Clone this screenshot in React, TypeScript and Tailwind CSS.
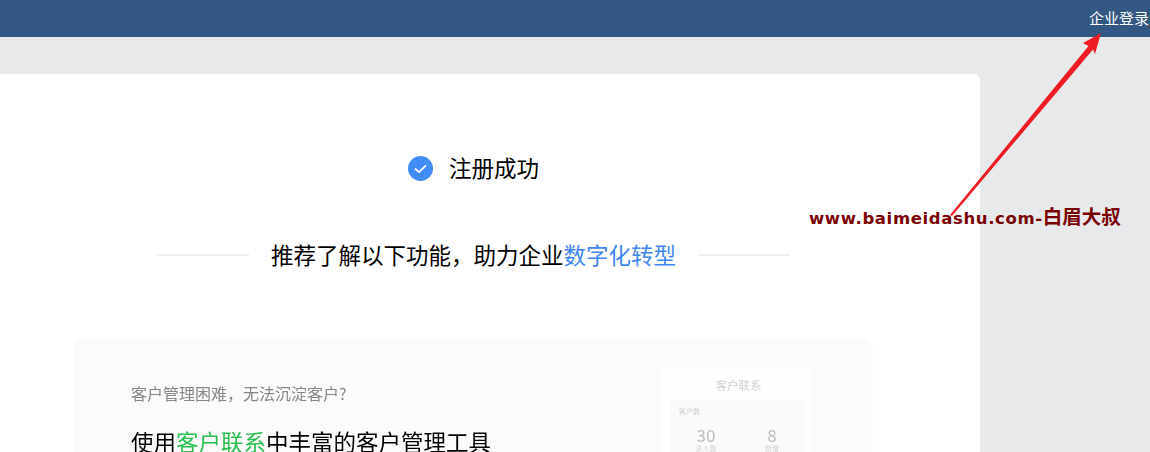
import React from "react";

const fontStack = { fontFamily: '"Noto Sans CJK SC", "Liberation Sans", sans-serif' };

function CheckBadge() {
  return (
    <svg width="25" height="25" viewBox="0 0 25 25" className="shrink-0">
      <circle cx="12.5" cy="12.5" r="12.5" fill="#418cf5" />
      <path d="M7.5 13l3.5 3.2 6.5-6.4" fill="none" stroke="#fff" strokeWidth="1.8" strokeLinecap="round" strokeLinejoin="round" />
    </svg>
  );
}

function CustomerPreview() {
  return (
    <div className="w-[151px] shrink-0 rounded-t-[8px] bg-[#fefefe] px-[10px] pt-[10px] blur-[0.4px]">
      <p className="pl-[6px] text-center text-[11.5px] leading-[16px] text-[#d0d0d0]">客户联系</p>
      <div className="mt-[7px] h-[80px] w-[133px] bg-[#fafafa] pl-[9px] pt-[6px]">
        <p className="text-[7px] leading-[10px] text-[#cfcfcf]">客户数</p>
        <div className="mt-[10px] flex">
          <div className="w-[54px] pr-[0px] text-center">
            <p className="text-[17px] leading-[17px] text-[#bdbdbd]">30</p>
            <p className="text-[7px] leading-[10px] text-[#d2d2d2]">总人数</p>
          </div>
          <div className="ml-[19px] w-[40px] text-center">
            <p className="text-[17px] leading-[17px] text-[#bdbdbd]">8</p>
            <p className="text-[7px] leading-[10px] text-[#d2d2d2]">新增</p>
          </div>
        </div>
      </div>
    </div>
  );
}

export default function App() {
  return (
    <div className="relative h-[452px] w-[1150px] overflow-hidden bg-[#e8e9eb]" style={fontStack}>
      <header className="flex h-[37px] items-center justify-end bg-[#315782] pr-px">
        <a className="text-[15px] text-white">企业登录</a>
      </header>

      <main className="-ml-[34px] mt-[37px] h-[400px] w-[1014px] rounded-[6px] bg-white pt-[78px]">
        <div className="ml-px flex h-[32px] items-center justify-center gap-[16px]">
          <CheckBadge />
          <h1 className="mb-[2px] text-[22.5px] leading-[32px] text-black">注册成功</h1>
        </div>

        <div className="ml-[190px] mt-[55px] flex h-[32px] items-center gap-[22px]">
          <div className="h-[2px] w-[93px] bg-[#eeeeee]" />
          <h2 className="mb-[2px] w-[406px] text-[22.5px] leading-[32px] text-black">
            推荐了解以下功能，助力企业<span className="text-[#3f86f2]">数字化转型</span>
          </h2>
          <div className="h-[2px] w-[91px] bg-[#eeeeee]" />
        </div>

        <section className="ml-[108px] mt-[67px] flex h-[200px] w-[799px] justify-between rounded-[10px] bg-[#fbfbfb] pl-[57px] pr-[62px] pt-[29px]">
          <div className="pt-[13px] blur-[0.2px]">
            <p className="text-[16px] leading-[26px] text-[#85878a]">客户管理困难，无法沉淀客户?</p>
            <p className="mt-[18px] text-[22.5px] leading-[34px] text-black">
              使用<span className="text-[#27bf4f]">客户联系</span>中丰富的客户管理工具
            </p>
          </div>
          <CustomerPreview />
        </section>
      </main>

      <svg width="1150" height="452" viewBox="0 0 1150 452" className="pointer-events-none absolute left-0 top-0">
        <path d="M1101 33L1083 43L1088.5 46L950 215L952 216L1093 49.5L1095 54Z" fill="#ee1c25" />
      </svg>
      <p className="absolute left-[809px] top-[207px] whitespace-nowrap text-[16.5px] font-bold leading-[22px] tracking-[0.62px] text-[#7a0000]" style={{ fontFamily: '"DejaVu Sans", "Noto Sans CJK SC", sans-serif' }}>
        www.baimeidashu.com-<span className="text-[19.5px] tracking-normal">白眉大叔</span>
      </p>
    </div>
  );
}
